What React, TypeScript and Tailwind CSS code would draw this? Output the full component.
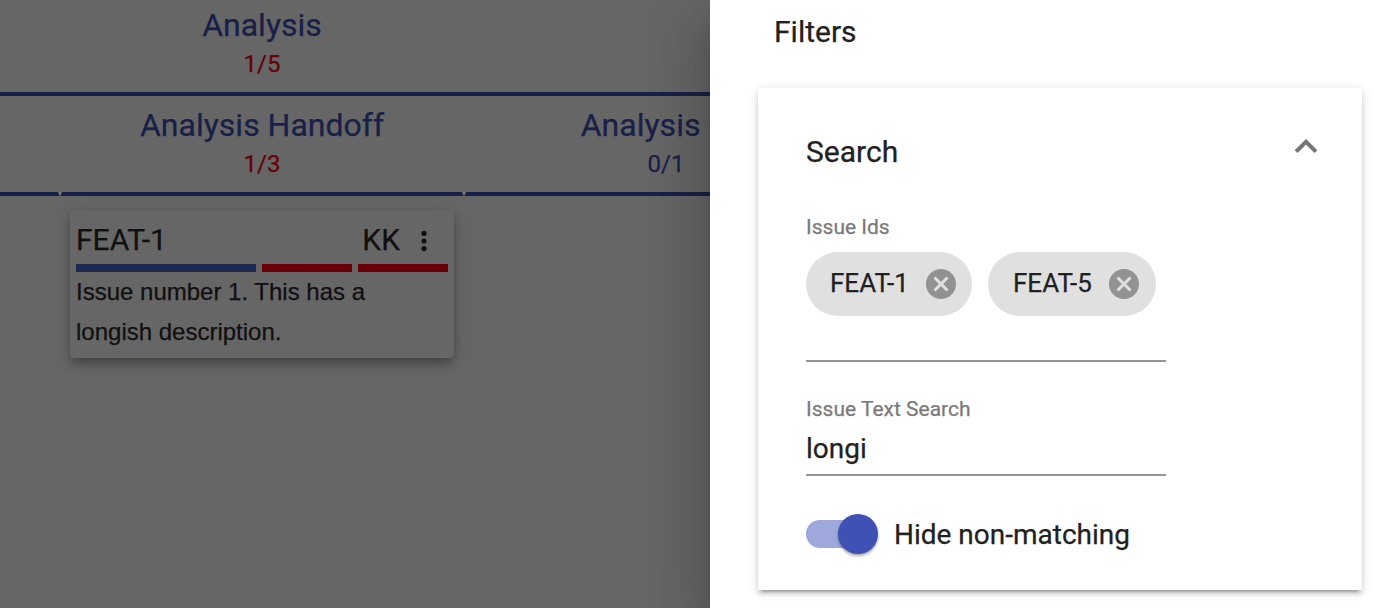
import React from "react";

function ColumnHeader({ name, count, over }: { name: string; count: string; over?: boolean }) {
  return (
    <div className="flex h-[100px] w-[404px] shrink-0 flex-col items-center border-b-4 border-[#192048] text-[#192048]">
      <div className="mt-[9px] h-[40px] whitespace-nowrap text-[32px] leading-[40px]">{name}</div>
      <div className={over ? "mt-[4px] text-2xl leading-[30px] text-[#680008]" : "mt-[4px] text-2xl leading-[30px]"}>{count}</div>
    </div>
  );
}

function Tick() {
  return (
    <svg className="absolute -left-[2px] bottom-0 z-10" width="4" height="4" viewBox="0 0 4 4">
      <path d="M0 0H4L2.6 3.5H1.4Z" fill="#777" />
    </svg>
  );
}

function IssueCard() {
  return (
    <div className="ml-[70px] mt-[14px] h-[148px] w-[384px] rounded-[4px] bg-[#666] px-[6px] text-[#101010] shadow-[0_4px_8px_-2px_rgba(0,0,0,0.2),0_8px_10px_rgba(0,0,0,0.14),0_2px_20px_rgba(0,0,0,0.12)]">
      <div className="flex h-[54px] items-center pt-[4px] text-[30px]">
        <span className="flex-1">FEAT-1</span>
        <span>KK</span>
        <svg className="ml-[6px] mr-[6px] mt-[4px]" width="36" height="36" viewBox="0 0 36 36" fill="currentColor">
          <circle cx="18" cy="10.4" r="2.6" />
          <circle cx="18" cy="18" r="2.6" />
          <circle cx="18" cy="25.6" r="2.6" />
        </svg>
      </div>
      <div className="flex h-2 gap-[6px]">
        <div className="w-[180px] bg-[#1c2a52]" />
        <div className="w-[90px] bg-[#680008]" />
        <div className="w-[90px] bg-[#680008]" />
      </div>
      <p className="font-['Liberation_Sans',Arial,sans-serif] text-2xl leading-[40px]">
        Issue number 1. This has a<br />longish description.
      </p>
    </div>
  );
}

function Chip({ label, wide }: { label: string; wide?: boolean }) {
  return (
    <div className={`flex h-16 items-center justify-between rounded-full bg-[#e0e0e0] ${wide ? "w-[168px] pl-[25px] pr-[14px]" : "w-[166px] pl-6 pr-[13px]"}`}>
      <span className="whitespace-nowrap pb-[2px] text-[26px] leading-[36px]">{label}</span>
      <svg width="36" height="36" viewBox="0 0 24 24" fill="#929292">
        <path d="M12 2C6.47 2 2 6.47 2 12s4.47 10 10 10 10-4.47 10-10S17.53 2 12 2zm5 13.59L15.59 17 12 13.41 8.41 17 7 15.59 10.59 12 7 8.41 8.41 7 12 10.59 15.59 7 17 8.41 13.41 12 17 15.59z" />
      </svg>
    </div>
  );
}

export default function App() {
  return (
    <div className="flex h-[608px] w-full overflow-hidden bg-white font-['Roboto',sans-serif] text-[#212121] [-webkit-text-stroke:0.25px_currentColor]">
      <main className="w-[710px] shrink-0 overflow-hidden bg-[#666]">
        <div className="flex h-[96px] border-b-4 border-[#192048] pl-[60px] text-[#192048]">
          <div className="flex w-[404px] flex-col items-center">
            <div className="mt-[5px] h-[40px] text-[32px] leading-[40px]">Analysis</div>
            <div className="mt-[4px] text-2xl leading-[30px] text-[#680008]">1/5</div>
          </div>
        </div>
        <div className="flex">
          <div className="h-[100px] w-[60px] shrink-0 border-b-4 border-[#192048]" />
          <div className="relative shrink-0">
            <Tick />
            <ColumnHeader name="Analysis Handoff" count="1/3" over />
          </div>
          <div className="relative shrink-0">
            <Tick />
            <ColumnHeader name="Analysis QA" count="0/1" />
          </div>
        </div>
        <IssueCard />
      </main>

      <aside className="relative flex-1 bg-white pl-12 pr-3 shadow-[0_16px_20px_-10px_rgba(0,0,0,0.2),0_32px_48px_4px_rgba(0,0,0,0.14),0_12px_60px_10px_rgba(0,0,0,0.12)]">
        <h1 className="h-[88px] pl-4 pt-[12px] text-[30px] leading-[40px]">Filters</h1>
        <section className="flex h-[502px] flex-col bg-white pl-12 shadow-[0_6px_2px_-4px_rgba(0,0,0,0.2),0_4px_4px_rgba(0,0,0,0.14),0_2px_10px_rgba(0,0,0,0.12)]">
          <div className="flex h-[127px] justify-between pr-[40px] pt-[44px]">
            <h2 className="text-[30px] leading-[40px]">Search</h2>
            <svg width="32" height="32" viewBox="0 0 32 32" fill="none" stroke="#757575" strokeWidth="4">
              <path d="M6.1 19.7L16 9.8L25.9 19.7" />
            </svg>
          </div>
          <div className="h-[147px] w-[360px] border-b-2 border-[#949494]">
            <div className="h-[37px] text-[21px] leading-[24px] text-[#7a7a7a]">Issue Ids</div>
            <div className="flex gap-4">
              <Chip label="FEAT-1" />
              <Chip label="FEAT-5" wide />
            </div>
          </div>
          <div className="h-[114px] w-[360px] border-b-2 border-[#949494] pt-[35px]">
            <div className="text-[21px] leading-[24px] text-[#7a7a7a]">Issue Text Search</div>
            <div className="mt-[10px] text-[28px] leading-[36px]">longi</div>
          </div>
          <div className="mt-[38px] flex h-10 items-center">
            <div className="flex h-7 w-[70px] items-center justify-end rounded-full bg-[#9fa8da]">
              <div className="-mr-[2px] h-10 w-10 shrink-0 rounded-full bg-[#3f51b5] shadow-[0_2px_3px_rgba(0,0,0,0.35)]" />
            </div>
            <span className="ml-[18px] pt-[2px] text-[28px] leading-[36px]">Hide non-matching</span>
          </div>
        </section>
      </aside>
    </div>
  );
}
